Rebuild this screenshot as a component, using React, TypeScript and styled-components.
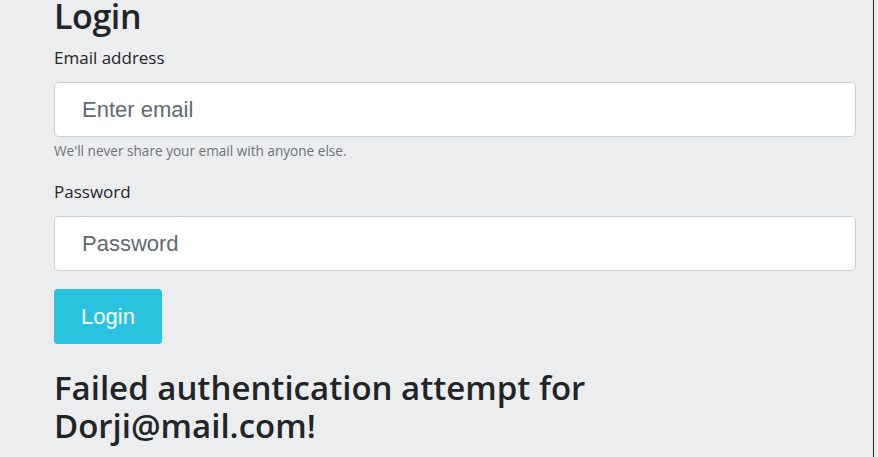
import React from "react";
import styled, { createGlobalStyle } from "styled-components";

const Global = createGlobalStyle`
  html, body { margin: 0; padding: 0; background: #ecedef; }
  body { font-family: "Open Sans", sans-serif; color: #222528; }
`;

const Page = styled.div`
  width: 874px;
  min-height: 457px;
  box-sizing: border-box;
  border-right: 1px solid #2b2b2b;
  padding: 0 17px 0 54px;
  display: flex;
  flex-direction: column;
`;

const Title = styled.h1`
  margin: -4px 0 0;
  font-size: 34px;
  line-height: 40px;
  font-weight: 600;
  letter-spacing: -0.4px;
`;

const Field = styled.div<{ $gap: number }>`
  display: flex;
  flex-direction: column;
  margin-top: ${(p) => p.$gap}px;
`;

const Label = styled.label`
  display: block;
  font-size: 17px;
  line-height: 24px;
`;

const Input = styled.input`
  margin-top: 12px;
  height: 55px;
  box-sizing: border-box;
  border: 1px solid #cdcfd1;
  border-radius: 5px;
  background: #fff;
  padding: 0 27px;
  font-family: "Liberation Sans", Arial, sans-serif;
  font-size: 22px;
  outline: none;
  &::placeholder { color: #5f6a72; }
`;

const Help = styled.small`
  margin-top: 4px;
  font-size: 13.6px;
  line-height: 20px;
  color: #6b737a;
`;

const Button = styled.button`
  margin-top: 18px;
  align-self: flex-start;
  width: 108px;
  height: 55px;
  border: none;
  border-radius: 4px;
  background: #29c3e0;
  color: #fff;
  font-family: "Liberation Sans", Arial, sans-serif;
  font-size: 22px;
  padding: 0;
`;

const Error = styled.h2`
  margin: 25px 0 0;
  font-size: 33px;
  line-height: 38px;
  font-weight: 600;
`;

export default function App() {
  return (
    <>
      <Global />
      <Page>
        <Title>Login</Title>
        <Field $gap={10}>
          <Label>Email address</Label>
          <Input type="email" placeholder="Enter email" />
          <Help>We'll never share your email with anyone else.</Help>
        </Field>
        <Field $gap={19}>
          <Label>Password</Label>
          <Input type="password" placeholder="Password" />
        </Field>
        <Button>Login</Button>
        <Error>
          Failed authentication attempt for
          <br />
          Dorji@mail.com!
        </Error>
      </Page>
    </>
  );
}
